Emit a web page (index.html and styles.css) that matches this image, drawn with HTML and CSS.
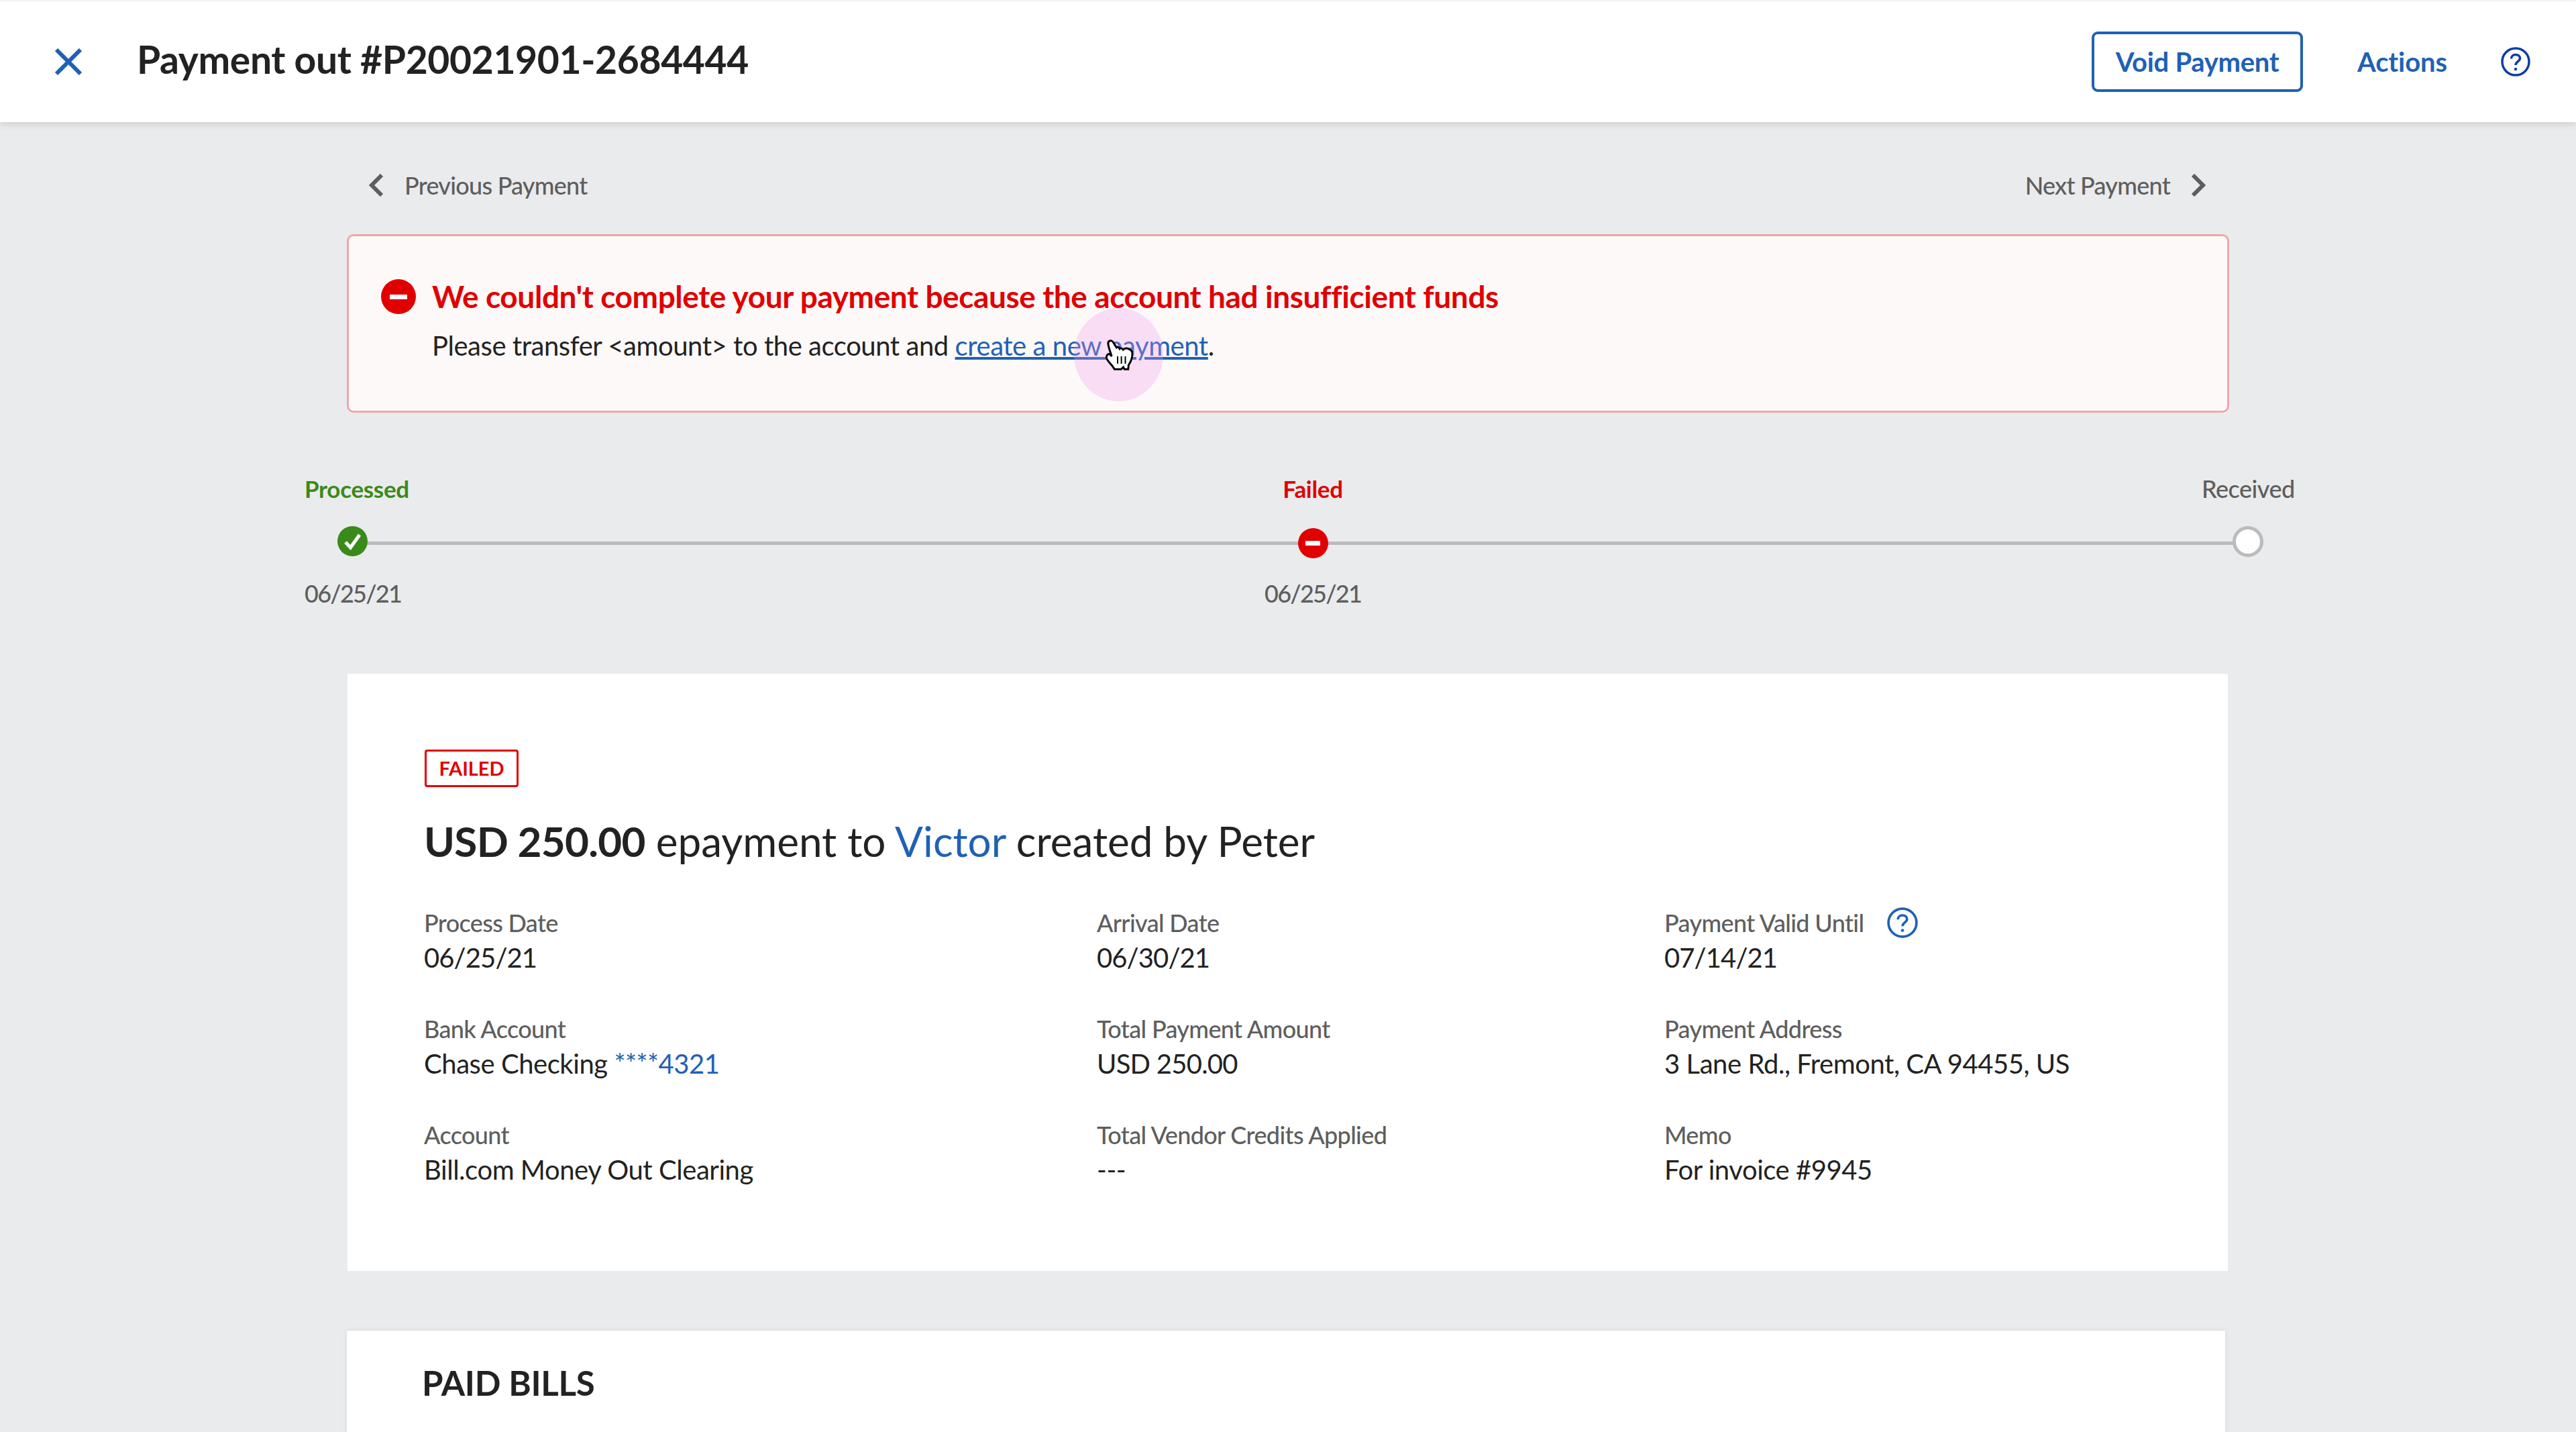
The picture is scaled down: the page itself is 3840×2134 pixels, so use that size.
FILE: index.html

```html
<!DOCTYPE html>
<html lang="en">
<head>
<meta charset="utf-8"/>
<title>Payment out #P20021901-2684444</title>
<meta content="width=device-width, initial-scale=1" name="viewport"/>
<link rel="stylesheet" href="styles.css">
</head>
<body>
<!-- Top bar -->
<header class="topbar">
  <svg class="close-icon" viewBox="0 0 40 40"><path d="M2 2L38 38M38 2L2 38"/></svg>
  <h1 class="page-title">Payment out #P20021901-2684444</h1>
  <button class="void-btn">Void Payment</button>
  <a class="actions-link">Actions</a>
  <svg class="help-icon help-top" viewBox="0 0 44 44"><circle cx="22" cy="22" r="20"/><path d="M15.500 17.500C15.500 13.500 18.500 11.500 22 11.500C25.500 11.500 28.500 13.500 28.500 17C28.500 21.500 22 22 22 27"/><circle class="help-dot" cx="22" cy="33" r="2.200"/></svg>
</header>

<main class="page">
  <!-- Previous / next -->
  <nav class="pager">
    <a class="pager-link">
      <svg class="chevron" viewBox="0 0 22 34"><path d="M19 2L4 17L19 32"/></svg>
      Previous Payment
    </a>
    <a class="pager-link">
      Next Payment
      <svg class="chevron" viewBox="0 0 22 34"><path d="M3 2L18 17L3 32"/></svg>
    </a>
  </nav>

  <!-- Error message -->
  <section class="alert">
    <span class="stop-icon stop-big"></span>
    <div class="alert-text">
      <p class="alert-title">We couldn't complete your payment because the account had insufficient funds</p>
      <p class="alert-body">Please transfer &lt;amount&gt; to the account and <a class="alert-link">create a new payment</a>.</p>
    </div>
    <span class="click-spot"></span>
    <svg class="hand-cursor" viewBox="0 0 125 140">
      <path class="hand" d="M22 5C32 3 36 14 42 24L50 36C54 32 60 33 64 42C68 38 76 38 80 46C86 40 96 38 104 42C116 46 122 52 122 64C122 84 116 100 105 115L103 135L86 135L81 125L71 135L41 135L31 120C22 108 10 98 5 85C2 74 10 64 18 66L28 76C22 56 14 38 12 20C11 12 15 6 22 5Z"/>
      <path class="hand-lines" d="M55 76V110M72 76V110M90 76V110"/>
    </svg>
  </section>

  <!-- Status tracker -->
  <section class="tracker">
    <div class="step">
      <span class="step-name step-ok">Processed</span>
      <svg class="step-dot dot-first" viewBox="0 0 45 45"><circle class="check-bg" cx="22.500" cy="22.500" r="22.500"/><path class="check-mark" d="M12 24L19.500 32L33 13"/></svg>
      <span class="step-date">06/25/21</span>
    </div>
    <div class="step step-mid">
      <span class="step-name step-bad">Failed</span>
      <span class="stop-icon stop-small"></span>
      <span class="step-date">06/25/21</span>
    </div>
    <div class="step step-end">
      <span class="step-name">Received</span>
      <span class="step-open"></span>
    </div>
  </section>

  <!-- Payment details -->
  <section class="card details">
    <span class="badge">FAILED</span>
    <h2 class="summary"><strong>USD 250.00</strong> epayment to <a class="blue">Victor</a> created by Peter</h2>
    <div class="fields">
      <div class="field">
        <span class="field-label">Process Date</span>
        <span class="field-value num">06/25/21</span>
      </div>
      <div class="field">
        <span class="field-label">Arrival Date</span>
        <span class="field-value num">06/30/21</span>
      </div>
      <div class="field">
        <span class="field-label">Payment Valid Until
          <svg class="help-icon help-small" viewBox="0 0 44 44"><circle cx="22" cy="22" r="20"/><path d="M15.500 17.500C15.500 13.500 18.500 11.500 22 11.500C25.500 11.500 28.500 13.500 28.500 17C28.500 21.500 22 22 22 27"/><circle class="help-dot" cx="22" cy="33" r="2.200"/></svg>
        </span>
        <span class="field-value num">07/14/21</span>
      </div>
      <div class="field">
        <span class="field-label">Bank Account</span>
        <span class="field-value">Chase Checking <a class="blue">****4321</a></span>
      </div>
      <div class="field">
        <span class="field-label">Total Payment Amount</span>
        <span class="field-value amount">USD 250.00</span>
      </div>
      <div class="field">
        <span class="field-label">Payment Address</span>
        <span class="field-value">3 Lane Rd., Fremont, CA 94455, US</span>
      </div>
      <div class="field">
        <span class="field-label">Account</span>
        <span class="field-value">Bill.com Money Out Clearing</span>
      </div>
      <div class="field">
        <span class="field-label">Total Vendor Credits Applied</span>
        <span class="field-value">---</span>
      </div>
      <div class="field">
        <span class="field-label">Memo</span>
        <span class="field-value">For invoice #9945</span>
      </div>
    </div>
  </section>

  <!-- Paid bills -->
  <section class="card bills">
    <h2 class="bills-title">PAID BILLS</h2>
  </section>
</main>
</body>
</html>
```

FILE: styles.css

```css
html, body {
    height: 100%;
    overflow: hidden;
}

body {
    margin: 0;
    background: #eaebed;
    color: #222;
    font-family: 'Lato', sans-serif;
}

p, h1, h2 {
    margin: 0;
}

/* Top bar */
.topbar {
    display: flex;
    align-items: center;
    height: 180px;
    border-top: 2px solid #f4f4f4;
    padding: 0 68px 0 82px;
    background: white;
    box-shadow: 0 3px 10px rgba(0,0,0,0.13);
    position: relative;
}

.close-icon {
    width: 40px;
    height: 40px;
    margin-right: 82px;
    fill: none;
    stroke: #1f61b5;
    stroke-width: 6;
}

.page-title {
    flex: 1;
    font-size: 57px;
    font-weight: 700;
    letter-spacing: -0.37px;
    color: #222;
    margin-bottom: 9px;
}

.void-btn {
    width: 315px;
    height: 90px;
    margin-right: 81px;
    padding: 0;
    background: white;
    border: 4px solid #1f61b5;
    border-radius: 9px;
    color: #1f61b5;
    font-family: inherit;
    font-size: 40px;
    font-weight: 700;
    letter-spacing: -0.3px;
}

.actions-link {
    margin-right: 80px;
    color: #1f61b5;
    font-size: 40px;
    font-weight: 700;
    letter-spacing: -0.1px;
}

.help-icon {
    fill: none;
    stroke: currentColor;
    stroke-width: 3.500;
    flex: none;
}

.help-dot {
    fill: currentColor;
    stroke: none;
}

.help-top {
    width: 44px;
    height: 44px;
    color: #0b3fa3;
}

.help-small {
    width: 46px;
    height: 46px;
    margin-left: 35px;
    color: #1f61b5;
}

.page {
    display: flex;
    flex-direction: column;
    align-items: flex-start;
}

/* Previous / next */
.pager {
    display: flex;
    justify-content: space-between;
    width: 2738px;
    margin: 76px 0 0 550px;
}

.pager-link {
    display: flex;
    align-items: center;
    gap: 31px;
    height: 36px;
    color: #5e5e5e;
    font-size: 36px;
    font-weight: 500;
    letter-spacing: -0.75px;
}

.chevron {
    width: 22px;
    height: 34px;
    fill: none;
    stroke: #5e5e5e;
    stroke-width: 6;
}

/* Error message */
.alert {
    display: flex;
    gap: 24px;
    box-sizing: border-box;
    width: 2806px;
    height: 266px;
    margin: 55px 0 0 517px;
    padding: 64px 48px 0;
    background: #fdf9f9;
    border: 3px solid #efa7aa;
    border-radius: 10px;
    position: relative;
}

.stop-icon {
    display: flex;
    align-items: center;
    justify-content: center;
    flex: none;
    border-radius: 50%;
    background: #e00000;
}

.stop-icon::after {
    content: "";
    background: white;
}

.stop-big {
    width: 52px;
    height: 52px;
}

.stop-big::after {
    width: 26px;
    height: 7px;
}

.stop-small {
    width: 45px;
    height: 45px;
}

.stop-small::after {
    width: 22px;
    height: 7px;
}

.alert-title {
    color: #e00000;
    font-size: 46px;
    font-weight: 700;
    letter-spacing: -0.42px;
    line-height: 52px;
}

.alert-body {
    margin-top: 23px;
    font-size: 40px;
    letter-spacing: -0.45px;
    line-height: 48px;
}

.alert-link {
    color: #1f61b5;
    text-decoration: underline;
}

.click-spot {
    position: absolute;
    left: 1081px;
    top: 107px;
    width: 133px;
    height: 139px;
    border-radius: 50%;
    background: rgba(238,150,238,0.28);
}

.hand-cursor {
    position: absolute;
    left: 1128px;
    top: 154px;
    width: 41px;
    height: 46px;
}

.hand {
    fill: white;
    stroke: black;
    stroke-width: 9;
}

.hand-lines {
    fill: none;
    stroke: black;
    stroke-width: 6;
}

/* Status tracker */
.tracker {
    display: grid;
    grid-template-columns: 1431px 1397px auto;
    margin: 92px 0 0 454px;
    position: relative;
}

.tracker::before {
    content: "";
    position: absolute;
    left: 90px;
    width: 2790px;
    top: 100px;
    height: 5px;
    background: #bbb;
}

.step {
    display: flex;
    flex-direction: column;
    align-items: flex-start;
    position: relative;
}

.step-mid, .step-end {
    align-items: center;
    justify-self: start;
}

.step-name {
    font-size: 36px;
    font-weight: 500;
    letter-spacing: -0.5px;
    line-height: 42px;
    height: 42px;
    color: #5e5e5e;
}

.step-ok, .step-bad {
    font-size: 35px;
    letter-spacing: -0.3px;
    font-weight: 700;
}

.step-ok {
    color: #3a8a1a;
}

.step-bad {
    color: #e00000;
}

.step-dot {
    width: 45px;
    height: 45px;
    margin-top: 35px;
}

.dot-first {
    margin-left: 49px;
}

.check-bg {
    fill: #3a8a1a;
}

.check-mark {
    fill: none;
    stroke: white;
    stroke-width: 5;
}

.step-open {
    box-sizing: border-box;
    width: 46px;
    height: 46px;
    margin-top: 35px;
    border: 5px solid #bbb;
    border-radius: 50%;
    background: white;
}

.stop-small {
    margin-top: 38px;
    margin-bottom: -3px;
}

.step-date {
    margin-top: 34px;
    font-size: 36px;
    font-weight: 500;
    letter-spacing: -1.75px;
    line-height: 42px;
    color: #5e5e5e;
}

/* Cards */
.card {
    box-sizing: border-box;
    background: white;
}

.details {
    width: 2803px;
    height: 890px;
    margin: 99px 0 0 518px;
    padding: 113px 114px 0;
}

.badge {
    display: inline-block;
    box-sizing: border-box;
    width: 140px;
    height: 56px;
    margin-left: 1px;
    border: 3px solid #e00000;
    border-radius: 4px;
    color: #e00000;
    font-size: 29px;
    font-weight: 700;
    line-height: 50px;
    text-align: center;
}

.summary {
    margin-top: 38px;
    font-size: 62px;
    font-weight: 400;
    line-height: 84px;
}

.summary strong {
    font-weight: 700;
    letter-spacing: -0.7px;
}

.blue {
    color: #1f61b5;
}

.fields {
    display: grid;
    grid-template-columns: 1003px 846px auto;
    row-gap: 58px;
    margin-top: 59px;
}

.field {
    display: flex;
    flex-direction: column;
    gap: 4px;
}

.field-label {
    display: flex;
    align-items: center;
    font-size: 36px;
    font-weight: 500;
    letter-spacing: -0.65px;
    line-height: 42px;
    height: 42px;
    color: #5e5e5e;
}

.field-value {
    font-size: 40px;
    letter-spacing: -0.45px;
    line-height: 54px;
}

.num {
    letter-spacing: -0.9px;
}

.amount {
    letter-spacing: -0.75px;
}

.bills {
    width: 2800px;
    height: 300px;
    margin: 89px 0 0 517px;
    padding: 43px 112px 0;
    box-shadow: 0 0 8px rgba(0,0,0,0.08);
}

.bills-title {
    font-size: 51px;
    font-weight: 700;
    letter-spacing: -0.3px;
    line-height: 70px;
}
```
